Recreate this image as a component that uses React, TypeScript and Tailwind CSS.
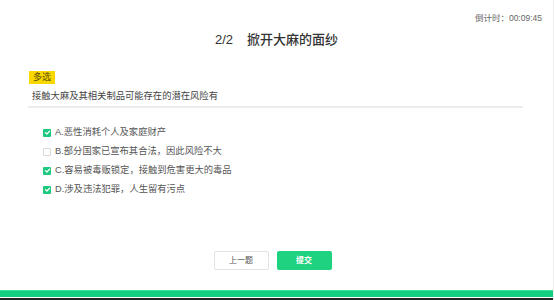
import React from "react";

const options = [
  { label: "A.恶性消耗个人及家庭财产", checked: true },
  { label: "B.部分国家已宣布其合法，因此风险不大", checked: false },
  { label: "C.容易被毒贩锁定，接触到危害更大的毒品", checked: true },
  { label: "D.涉及违法犯罪，人生留有污点", checked: true },
];

function Box({ checked }: { checked: boolean }) {
  if (!checked)
    return <div className="w-[8px] h-[8px] border border-[#d9d9d9] bg-white rounded-[1px]" />;
  return (
    <div className="w-[8px] h-[8px] bg-[#1ec97f] rounded-[1px] flex items-center justify-center">
      <svg width="7" height="7" viewBox="0 0 10 10">
        <path d="M2 5.2 L4.2 7.2 L8 3" fill="none" stroke="white" strokeWidth="1.8" strokeLinecap="round" strokeLinejoin="round" />
      </svg>
    </div>
  );
}

export default function App() {
  return (
    <div
      className="w-[554px] h-[300px] bg-white flex flex-col overflow-hidden border-r border-[#eeeeee]"
      style={{ fontFamily: '"Liberation Sans", "Noto Sans CJK SC", sans-serif' }}
    >
      <div className="pt-[12px] pr-[11px] text-right text-[8.5px] leading-[12px] text-[#666]">倒计时：00:09:45</div>
      <div className="mt-[8px] flex justify-center items-center leading-[16px] text-[13px] text-[#333] font-medium">
        <span className="mr-[14px]">2/2</span>
        <span>掀开大麻的面纱</span>
      </div>
      <div className="mt-[23px] ml-[29px] self-start h-[13px] leading-[13px] px-[4px] bg-[#f8d800] text-[9px] text-[#5a4a00]">多选</div>
      <div className="mt-[5px] ml-[32px] text-[9.3px] leading-[14px] text-[#444]">接触大麻及其相关制品可能存在的潜在风险有</div>
      <div className="mt-[3px] ml-[28px] w-[495px] h-[2px] bg-[#ececec]" />
      <div className="mt-[15px] ml-[43px] flex flex-col">
        {options.map((o) => (
          <div key={o.label} className="h-[19px] flex items-center">
            <Box checked={o.checked} />
            <span className="ml-[4px] text-[9.3px] text-[#555]">{o.label}</span>
          </div>
        ))}
      </div>
      <div className="mt-[52px] flex justify-center gap-[8px] pr-[8px]">
        <div className="w-[55px] h-[19px] border border-[#e3e3e3] rounded-[2px] bg-white flex items-center justify-center text-[8px] text-[#555]">上一题</div>
        <div className="w-[55px] h-[19px] rounded-[2px] bg-[#1fd27f] flex items-center justify-center text-[8px] text-white font-bold">提交</div>
      </div>
      <div className="mt-[20px] h-[7px] bg-[#13cd80] border-t border-[#3ddc99]" />
      <div className="h-[1px] bg-white" />
      <div className="h-[2px] bg-[#222]" />
    </div>
  );
}
